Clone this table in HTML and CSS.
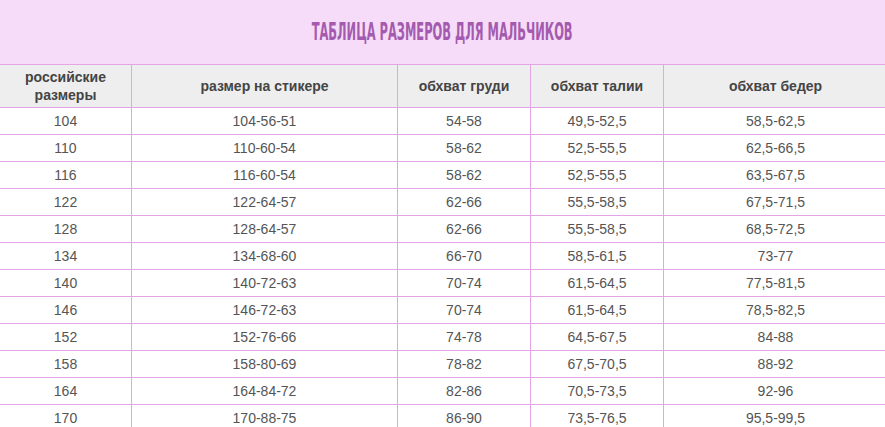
FILE: index.html
```html
<!DOCTYPE html>
<html lang="ru">
<head>
<meta charset="utf-8">
<title>Таблица размеров для мальчиков</title>
<link rel="stylesheet" href="styles.css">
</head>
<body>
<div class="page">
  <div class="banner">
    <h1 class="title"><span class="title-text">ТАБЛИЦА РАЗМЕРОВ ДЛЯ МАЛЬЧИКОВ</span></h1>
  </div>
  <table class="sizes">
    <colgroup>
      <col class="c1"><col class="c2"><col class="c3"><col class="c4"><col class="c5">
    </colgroup>
    <thead>
      <tr>
        <th>российские<br>размеры</th>
        <th>размер на стикере</th>
        <th>обхват груди</th>
        <th>обхват талии</th>
        <th>обхват бедер</th>
      </tr>
    </thead>
    <tbody>
      <tr><td>104</td><td>104-56-51</td><td>54-58</td><td>49,5-52,5</td><td>58,5-62,5</td></tr>
      <tr><td>110</td><td>110-60-54</td><td>58-62</td><td>52,5-55,5</td><td>62,5-66,5</td></tr>
      <tr><td>116</td><td>116-60-54</td><td>58-62</td><td>52,5-55,5</td><td>63,5-67,5</td></tr>
      <tr><td>122</td><td>122-64-57</td><td>62-66</td><td>55,5-58,5</td><td>67,5-71,5</td></tr>
      <tr><td>128</td><td>128-64-57</td><td>62-66</td><td>55,5-58,5</td><td>68,5-72,5</td></tr>
      <tr><td>134</td><td>134-68-60</td><td>66-70</td><td>58,5-61,5</td><td>73-77</td></tr>
      <tr><td>140</td><td>140-72-63</td><td>70-74</td><td>61,5-64,5</td><td>77,5-81,5</td></tr>
      <tr><td>146</td><td>146-72-63</td><td>70-74</td><td>61,5-64,5</td><td>78,5-82,5</td></tr>
      <tr><td>152</td><td>152-76-66</td><td>74-78</td><td>64,5-67,5</td><td>84-88</td></tr>
      <tr><td>158</td><td>158-80-69</td><td>78-82</td><td>67,5-70,5</td><td>88-92</td></tr>
      <tr><td>164</td><td>164-84-72</td><td>82-86</td><td>70,5-73,5</td><td>92-96</td></tr>
      <tr><td>170</td><td>170-88-75</td><td>86-90</td><td>73,5-76,5</td><td>95,5-99,5</td></tr>
    </tbody>
  </table>
</div>
</body>
</html>
```

FILE: styles.css
```css
html, body {
  margin: 0;
  padding: 0;
  overflow: hidden;
  background: #ffffff;
}

.page {
  width: 885px;
  overflow: hidden;
  font-family: "Liberation Sans", Arial, sans-serif;
}

.banner {
  height: 64px;
  background: #f6dcf8;
  display: flex;
  align-items: center;
  justify-content: center;
}

.title {
  margin: 0;
  padding-top: 0;
  font-family: "DejaVu Sans Condensed", "DejaVu Sans", sans-serif;
  font-stretch: condensed;
  font-weight: bold;
  font-size: 24px;
  line-height: 1;
  color: #a45aae;
  white-space: nowrap;
}

.title-text {
  display: inline-block;
  transform: scaleX(0.53);
  letter-spacing: 0;
}

.sizes {
  border-collapse: collapse;
  table-layout: fixed;
  width: 888px;
  margin-left: -1px;
}

.c1 { width: 132px; }
.c2 { width: 266px; }
.c3 { width: 133px; }
.c4 { width: 133px; }
.c5 { width: 224px; }

.sizes th,
.sizes td {
  border: 1px solid #e3a5e3;
  text-align: center;
  padding: 0;
}

.sizes th {
  height: 42px;
  background: #eeeeee;
  color: #444444;
  font-size: 14px;
  font-weight: bold;
  line-height: 18px;
}

.sizes td {
  height: 26px;
  color: #555555;
  font-size: 14px;
  line-height: 16px;
}
```
